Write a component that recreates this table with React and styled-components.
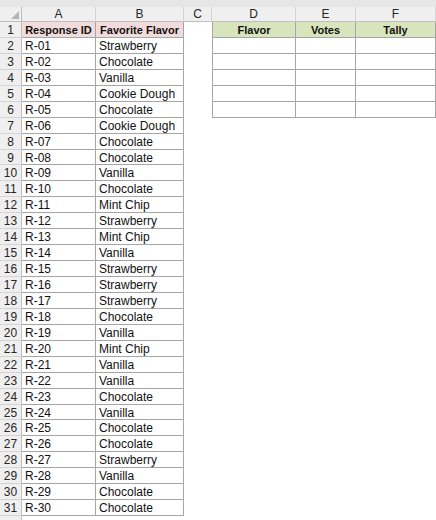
import styled, { createGlobalStyle } from "styled-components";

const GlobalStyle = createGlobalStyle`
  html, body {
    margin: 0;
    padding: 0;
    background: #ffffff;
    overflow: hidden;
  }
  body {
    font-family: "Liberation Sans", Arial, sans-serif;
  }
`;

const responses = [
  "Strawberry", "Chocolate", "Vanilla", "Cookie Dough", "Chocolate",
  "Cookie Dough", "Chocolate", "Chocolate", "Vanilla", "Chocolate",
  "Mint Chip", "Strawberry", "Mint Chip", "Vanilla", "Strawberry",
  "Strawberry", "Strawberry", "Chocolate", "Vanilla", "Mint Chip",
  "Vanilla", "Vanilla", "Chocolate", "Vanilla", "Chocolate",
  "Chocolate", "Strawberry", "Vanilla", "Chocolate", "Chocolate",
];

const columns = ["A", "B", "C", "D", "E", "F"];
const HEAD_FILL = { pink: "#f2dcdb", green: "#d8e4bc" };

const App = () => {
  const rows = [];
  for (let r = 1; r <= 32; r++) {
    const data = r >= 2 && r <= 31 ? responses[r - 2] : null;
    const id = r >= 2 && r <= 31 ? "R-" + String(r - 1).padStart(2, "0") : "";
    const inTable = r <= 31;
    const inTally = r <= 6;
    rows.push(
      // row 32 only peeks in at the bottom edge, its number is out of view
      <RowHead key={"h" + r}>{r <= 31 ? r : ""}</RowHead>,
      r === 1 ? (
        <Cell key={"a" + r} $bordered $fill="pink" $bold>Response ID</Cell>
      ) : (
        <Cell key={"a" + r} $bordered={inTable}>{id}</Cell>
      ),
      r === 1 ? (
        <Cell key={"b" + r} $bordered $fill="pink" $bold>Favorite Flavor</Cell>
      ) : (
        <Cell key={"b" + r} $bordered={inTable}>{data}</Cell>
      ),
      <Cell key={"c" + r} />,
      <Cell key={"d" + r} $bordered={inTally} $left={inTally} $fill={r === 1 ? "green" : null} $bold={r === 1}>
        {r === 1 ? "Flavor" : ""}
      </Cell>,
      <Cell key={"e" + r} $bordered={inTally} $fill={r === 1 ? "green" : null} $bold={r === 1}>
        {r === 1 ? "Votes" : ""}
      </Cell>,
      <Cell key={"f" + r} $bordered={inTally} $fill={r === 1 ? "green" : null} $bold={r === 1}>
        {r === 1 ? "Tally" : ""}
      </Cell>
    );
  }

  return (
    <>
      <GlobalStyle />
      <Page>
        <TopBand />
        <Sheet>
          <Corner>
            <svg width="8" height="8" viewBox="0 0 8 8">
              <polygon points="8,0 8,8 0,8" fill="#b5b5b5" />
            </svg>
          </Corner>
          {columns.map((c) => (
            <ColHead key={c}>{c}</ColHead>
          ))}
          {rows}
        </Sheet>
      </Page>
    </>
  );
};

const Page = styled.div`
  width: 436px;
  height: 520px;
  overflow: hidden;
  background: #ffffff;
`;

const TopBand = styled.div`
  height: 7px;
  background: #e6e6e6;
`;

const Sheet = styled.div`
  display: grid;
  grid-template-columns: 22px 74px 88px 28px 84px 60px 80px;
  grid-template-rows: 15px;
  grid-auto-rows: 15.95px;
  font-size: 12px;
  color: #1b1b1b;
`;

const Corner = styled.div`
  box-sizing: border-box;
  background: #efefef;
  border-right: 1px solid #bfbfbf;
  border-bottom: 1px solid #bfbfbf;
  display: flex;
  align-items: flex-end;
  justify-content: flex-end;
  padding: 0 2px 2px 0;
`;

const ColHead = styled.div`
  box-sizing: border-box;
  background: #efefef;
  border-right: 1px solid #d4d4d4;
  border-bottom: 1px solid #bfbfbf;
  text-align: center;
  line-height: 15px;
  color: #262626;
`;

const RowHead = styled.div`
  box-sizing: border-box;
  background: #efefef;
  border-right: 1px solid #bfbfbf;
  border-bottom: 1px solid #d4d4d4;
  text-align: center;
  line-height: 17px;
  color: #262626;
`;

const Cell = styled.div`
  box-sizing: border-box;
  padding: 0 3px;
  line-height: 17px;
  white-space: nowrap;
  overflow: hidden;
  background: ${(p) => (p.$fill ? HEAD_FILL[p.$fill] : "#ffffff")};
  border-right: ${(p) => (p.$bordered ? "1px solid #a6a6a6" : "none")};
  border-bottom: ${(p) => (p.$bordered ? "1px solid #a6a6a6" : "none")};
  border-left: ${(p) => (p.$left ? "1px solid #a6a6a6" : "none")};
  font-weight: ${(p) => (p.$bold ? 700 : 400)};
  font-size: ${(p) => (p.$bold ? "11px" : "12px")};
  text-align: ${(p) => (p.$bold ? "center" : "left")};
  color: #111;
`;

export default App;
